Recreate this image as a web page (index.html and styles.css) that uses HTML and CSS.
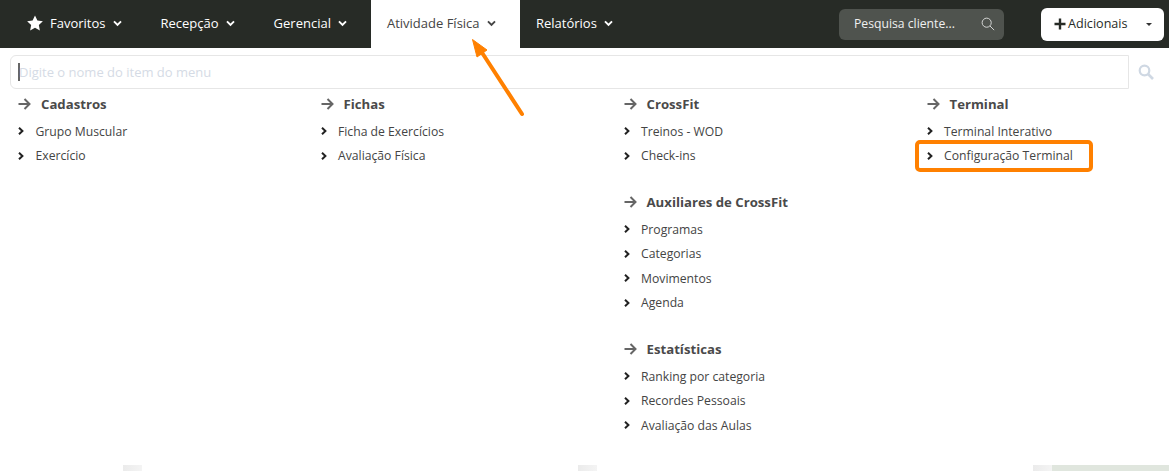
FILE: index.html
```html
<!DOCTYPE html>
<html lang="pt-BR">
<head>
  <meta charset="UTF-8">
  <meta name="viewport" content="width=device-width, initial-scale=1.0">
  <title>Atividade Física</title>
  <link rel="stylesheet" href="styles.css">
</head>
<body>
  <nav class="topbar">
    <ul class="menu">
      <li class="menu-item item-favoritos">
        <svg class="star" viewBox="0 0 24 24" width="16" height="16"><path fill="#fff" d="M12 .6l3.6 7.6 8.2 1.1-6 5.7 1.5 8.2-7.3-4-7.3 4 1.5-8.2-6-5.7 8.2-1.1z"/></svg>
        Favoritos
        <svg class="chev" viewBox="0 0 10 8" width="9" height="7"><path d="M1 1.5l4 4 4-4" fill="none" stroke="currentColor" stroke-width="2.2"/></svg>
      </li>
      <li class="menu-item item-recepcao">Recepção
        <svg class="chev" viewBox="0 0 10 8" width="9" height="7"><path d="M1 1.5l4 4 4-4" fill="none" stroke="currentColor" stroke-width="2.2"/></svg>
      </li>
      <li class="menu-item item-gerencial">Gerencial
        <svg class="chev" viewBox="0 0 10 8" width="9" height="7"><path d="M1 1.5l4 4 4-4" fill="none" stroke="currentColor" stroke-width="2.2"/></svg>
      </li>
      <li class="menu-item active">Atividade Física
        <svg class="chev" viewBox="0 0 10 8" width="9" height="7"><path d="M1 1.5l4 4 4-4" fill="none" stroke="currentColor" stroke-width="2.2"/></svg>
      </li>
      <li class="menu-item">Relatórios
        <svg class="chev" viewBox="0 0 10 8" width="9" height="7"><path d="M1 1.5l4 4 4-4" fill="none" stroke="currentColor" stroke-width="2.2"/></svg>
      </li>
    </ul>
    <div class="client-search">
      <span class="search-label">Pesquisa cliente...</span>
      <svg viewBox="0 0 16 16" width="14" height="14"><circle cx="6.5" cy="6.5" r="5.2" fill="none" stroke="#d8dad8" stroke-width="1.1"/><path d="M10.3 10.3l4.7 4.7" stroke="#d8dad8" stroke-width="1.1"/></svg>
    </div>
    <div class="add-button">
      <svg viewBox="0 0 12 12" width="12" height="12"><path d="M6 .5v11M.5 6h11" stroke="#272b26" stroke-width="2.4"/></svg>
      <span class="add-label">Adicionais</span>
      <span class="caret"></span>
    </div>
  </nav>

  <div class="search-row">
    <div class="search-box"><span class="text-caret"></span><span class="placeholder">Digite o nome do item do menu</span></div>
    <svg class="search-icon" viewBox="0 0 16 16" width="16" height="16"><circle cx="6.5" cy="6.5" r="4.8" fill="none" stroke="#cfd8e3" stroke-width="2.2"/><path d="M10 10l5 5" stroke="#cfd8e3" stroke-width="2.6"/></svg>
  </div>

  <div class="columns">
    <div class="column">
      <section class="group">
        <h3><svg class="arrow" viewBox="0 0 13 12" width="13" height="12"><path d="M.5 6h11M6.5 1l5 5-5 5" fill="none" stroke="#666" stroke-width="2"/></svg>Cadastros</h3>
        <ul>
          <li><svg class="bullet" viewBox="0 0 6 8" width="6" height="8"><path d="M1 .8L4.4 4 1 7.2" fill="none" stroke="#222" stroke-width="2"/></svg>Grupo Muscular</li>
          <li><svg class="bullet" viewBox="0 0 6 8" width="6" height="8"><path d="M1 .8L4.4 4 1 7.2" fill="none" stroke="#222" stroke-width="2"/></svg>Exercício</li>
        </ul>
      </section>
    </div>
    <div class="column">
      <section class="group">
        <h3><svg class="arrow" viewBox="0 0 13 12" width="13" height="12"><path d="M.5 6h11M6.5 1l5 5-5 5" fill="none" stroke="#666" stroke-width="2"/></svg>Fichas</h3>
        <ul>
          <li><svg class="bullet" viewBox="0 0 6 8" width="6" height="8"><path d="M1 .8L4.4 4 1 7.2" fill="none" stroke="#222" stroke-width="2"/></svg>Ficha de Exercícios</li>
          <li><svg class="bullet" viewBox="0 0 6 8" width="6" height="8"><path d="M1 .8L4.4 4 1 7.2" fill="none" stroke="#222" stroke-width="2"/></svg>Avaliação Física</li>
        </ul>
      </section>
    </div>
    <div class="column">
      <section class="group">
        <h3><svg class="arrow" viewBox="0 0 13 12" width="13" height="12"><path d="M.5 6h11M6.5 1l5 5-5 5" fill="none" stroke="#666" stroke-width="2"/></svg>CrossFit</h3>
        <ul>
          <li><svg class="bullet" viewBox="0 0 6 8" width="6" height="8"><path d="M1 .8L4.4 4 1 7.2" fill="none" stroke="#222" stroke-width="2"/></svg>Treinos - WOD</li>
          <li><svg class="bullet" viewBox="0 0 6 8" width="6" height="8"><path d="M1 .8L4.4 4 1 7.2" fill="none" stroke="#222" stroke-width="2"/></svg>Check-ins</li>
        </ul>
      </section>
      <section class="group">
        <h3><svg class="arrow" viewBox="0 0 13 12" width="13" height="12"><path d="M.5 6h11M6.5 1l5 5-5 5" fill="none" stroke="#666" stroke-width="2"/></svg>Auxiliares de CrossFit</h3>
        <ul>
          <li><svg class="bullet" viewBox="0 0 6 8" width="6" height="8"><path d="M1 .8L4.4 4 1 7.2" fill="none" stroke="#222" stroke-width="2"/></svg>Programas</li>
          <li><svg class="bullet" viewBox="0 0 6 8" width="6" height="8"><path d="M1 .8L4.4 4 1 7.2" fill="none" stroke="#222" stroke-width="2"/></svg>Categorias</li>
          <li><svg class="bullet" viewBox="0 0 6 8" width="6" height="8"><path d="M1 .8L4.4 4 1 7.2" fill="none" stroke="#222" stroke-width="2"/></svg>Movimentos</li>
          <li><svg class="bullet" viewBox="0 0 6 8" width="6" height="8"><path d="M1 .8L4.4 4 1 7.2" fill="none" stroke="#222" stroke-width="2"/></svg>Agenda</li>
        </ul>
      </section>
      <section class="group">
        <h3><svg class="arrow" viewBox="0 0 13 12" width="13" height="12"><path d="M.5 6h11M6.5 1l5 5-5 5" fill="none" stroke="#666" stroke-width="2"/></svg>Estatísticas</h3>
        <ul>
          <li><svg class="bullet" viewBox="0 0 6 8" width="6" height="8"><path d="M1 .8L4.4 4 1 7.2" fill="none" stroke="#222" stroke-width="2"/></svg>Ranking por categoria</li>
          <li><svg class="bullet" viewBox="0 0 6 8" width="6" height="8"><path d="M1 .8L4.4 4 1 7.2" fill="none" stroke="#222" stroke-width="2"/></svg>Recordes Pessoais</li>
          <li><svg class="bullet" viewBox="0 0 6 8" width="6" height="8"><path d="M1 .8L4.4 4 1 7.2" fill="none" stroke="#222" stroke-width="2"/></svg>Avaliação das Aulas</li>
        </ul>
      </section>
    </div>
    <div class="column">
      <section class="group">
        <h3><svg class="arrow" viewBox="0 0 13 12" width="13" height="12"><path d="M.5 6h11M6.5 1l5 5-5 5" fill="none" stroke="#666" stroke-width="2"/></svg>Terminal</h3>
        <ul>
          <li><svg class="bullet" viewBox="0 0 6 8" width="6" height="8"><path d="M1 .8L4.4 4 1 7.2" fill="none" stroke="#222" stroke-width="2"/></svg>Terminal Interativo</li>
          <li class="highlighted"><svg class="bullet" viewBox="0 0 6 8" width="6" height="8"><path d="M1 .8L4.4 4 1 7.2" fill="none" stroke="#222" stroke-width="2"/></svg>Configuração Terminal</li>
        </ul>
      </section>
    </div>
  </div>

  <div class="bottom-strip">
    <span class="stub"></span>
    <span class="stub"></span>
    <span class="stub"></span>
    <span class="strip-fill"></span>
  </div>

  <!-- seta laranja da anotacao -->
  <svg class="annotation" viewBox="0 0 60 84" width="60" height="84">
    <path d="M53 76L10 10" stroke="#ff8000" stroke-width="4" stroke-linecap="round" fill="none"/>
    <path d="M3.5 1.5L8 19L18 12z" fill="#ff8000" stroke="#ff8000" stroke-linejoin="round"/>
  </svg>
</body>
</html>
```

FILE: styles.css
```css
* {
  box-sizing: border-box;
}

body {
  margin: 0;
  height: 471px;
  overflow: hidden;
  display: flex;
  flex-direction: column;
  position: relative;
  background-color: #fff;
  font-family: "Open Sans", sans-serif;
  color: #444;
}

ul {
  list-style: none;
  margin: 0;
  padding: 0;
}

.topbar {
  height: 48px;
  flex: none;
  display: flex;
  align-items: center;
  background-color: #272b26;
}

.menu {
  display: flex;
  height: 100%;
  padding-left: 27px;
}

.menu-item {
  display: flex;
  align-items: center;
  height: 100%;
  padding-bottom: 2px;
  font-size: 13px;
  color: #fff;
}

.item-favoritos {
  margin-right: 39px;
}

.item-recepcao {
  margin-right: 39px;
}

.item-gerencial {
  margin-right: 24px;
}

.menu-item.active {
  width: 149px;
  padding-left: 16px;
  background-color: #fff;
  color: #444;
  margin-right: 16px;
}

.star {
  margin-right: 7px;
}

.chev {
  margin-left: 7px;
}

.client-search {
  width: 165px;
  height: 31px;
  margin-left: auto;
  padding: 0 9px 0 15px;
  display: flex;
  align-items: center;
  justify-content: space-between;
  background-color: #4f534e;
  border-radius: 6px;
  color: #f0f0f0;
  font-size: 12.2px;
}

.search-label {
  margin-bottom: 2px;
}

.add-button {
  width: 123px;
  height: 33px;
  margin: 0 5px 0 37px;
  padding: 0 13px;
  display: flex;
  align-items: center;
  background-color: #fff;
  border-radius: 6px;
  color: #272b26;
  font-size: 12.6px;
  font-weight: 500;
}

.add-label {
  margin-left: 2px;
  margin-bottom: 2px;
}

.caret {
  margin-left: auto;
  margin-right: -1px;
  border-top: 3px solid #333;
  border-left: 3px solid transparent;
  border-right: 3px solid transparent;
}

.search-row {
  display: flex;
  align-items: center;
  margin-top: 7px;
  padding-left: 10px;
}

.search-box {
  width: 1119px;
  height: 34px;
  display: flex;
  align-items: center;
  padding-left: 7px;
  border: 1px solid #e6e6e6;
  border-radius: 6px 0 0 6px;
}

.text-caret {
  width: 2px;
  height: 18px;
  background-color: #666;
}

.placeholder {
  margin-left: -1px;
  font-size: 13px;
  color: #d5dbe5;
}

.search-icon {
  margin-left: 9px;
}

.columns {
  display: grid;
  grid-template-columns: 302.5px 303px 303px 1fr;
  padding: 5px 0 0 18px;
}

.group {
  margin-bottom: 24px;
}

.group h3 {
  display: flex;
  align-items: center;
  height: 20px;
  margin: 0 0 5px;
  font-size: 13.2px;
  font-weight: 700;
  color: #4a4a4a;
}

.arrow {
  margin-right: 10px;
}

.group li {
  display: flex;
  align-items: center;
  height: 24.5px;
  font-size: 12.2px;
  color: #444;
}

.bullet {
  margin-right: 11.5px;
}

.highlighted {
  outline: 4px solid #ff8000;
  border-radius: 1px;
  width: 170px;
  margin-left: -7.5px;
  padding-left: 7.5px;
}

.bottom-strip {
  display: flex;
  height: 6px;
  margin-top: auto;
  padding-left: 123px;
  gap: 436px;
}

.stub {
  width: 19px;
  background: linear-gradient(90deg, #ebebeb, #f4f4f4);
}

.strip-fill {
  flex: 1;
  margin-left: -436px;
  background-color: #e0e6de;
}

.annotation {
  position: absolute;
  left: 469px;
  top: 38px;
}
```
